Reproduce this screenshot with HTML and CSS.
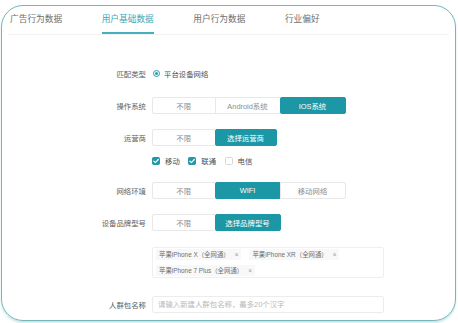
FILE: index.html
```html
<!DOCTYPE html>
<html lang="zh-CN">
<head>
<meta charset="utf-8">
<link rel="stylesheet" href="styles.css">
</head>
<body>
<div class="frame">
  <div class="tabs">
    <div class="tab">广告行为数据</div>
    <div class="tab active">用户基础数据</div>
    <div class="tab">用户行为数据</div>
    <div class="tab">行业偏好</div>
  </div>
  <div class="form">
    <div class="row row-match">
      <span class="label">匹配类型</span>
      <div class="ctrl radio-line">
        <span class="radio"></span><span class="opt">平台设备网络</span>
      </div>
    </div>
    <div class="row row-os">
      <span class="label">操作系统</span>
      <div class="ctrl seg">
        <span class="seg-btn">不限</span>
        <span class="seg-btn">Android系统</span>
        <span class="seg-btn on">IOS系统</span>
      </div>
    </div>
    <div class="row row-isp">
      <span class="label">运营商</span>
      <div class="ctrl seg">
        <span class="seg-btn">不限</span>
        <span class="seg-btn on narrow">选择运营商</span>
      </div>
    </div>
    <div class="row row-checks">
      <span class="label"></span>
      <div class="ctrl checks">
        <span class="check-item"><span class="cb on"><svg viewBox="0 0 8 8" width="8" height="8"><path d="M1.8 4.1 L3.4 5.6 L6.3 2.5" fill="none" stroke="#fff" stroke-width="1.2" stroke-linecap="round" stroke-linejoin="round"/></svg></span><span class="opt">移动</span></span>
        <span class="check-item"><span class="cb on"><svg viewBox="0 0 8 8" width="8" height="8"><path d="M1.8 4.1 L3.4 5.6 L6.3 2.5" fill="none" stroke="#fff" stroke-width="1.2" stroke-linecap="round" stroke-linejoin="round"/></svg></span><span class="opt">联通</span></span>
        <span class="check-item"><span class="cb"></span><span class="opt">电信</span></span>
      </div>
    </div>
    <div class="row row-net">
      <span class="label">网络环境</span>
      <div class="ctrl seg">
        <span class="seg-btn">不限</span>
        <span class="seg-btn on">WIFI</span>
        <span class="seg-btn">移动网络</span>
      </div>
    </div>
    <div class="row row-brand">
      <span class="label">设备品牌型号</span>
      <div class="ctrl seg">
        <span class="seg-btn">不限</span>
        <span class="seg-btn on">选择品牌型号</span>
      </div>
    </div>
    <div class="row row-tags">
      <span class="label"></span>
      <div class="ctrl tagbox">
        <span class="tag">苹果iPhone X（全网通）<span class="x">×</span></span>
        <span class="tag">苹果iPhone XR（全网通）<span class="x">×</span></span>
        <span class="tag">苹果iPhone 7 Plus（全网通）<span class="x">×</span></span>
      </div>
    </div>
    <div class="row row-name">
      <span class="label">人群包名称</span>
      <div class="ctrl">
        <input class="name-input" type="text" placeholder="请输入新建人群包名称，最多20个汉字">
      </div>
    </div>
  </div>
</div>
</body>
</html>
```
FILE: styles.css
```css
* { box-sizing: border-box; }
html, body { margin: 0; padding: 0; background: #fff; }
body {
  font-family: "Liberation Sans", "Noto Sans CJK SC", sans-serif;
  width: 458px;
  height: 323px;
  overflow: hidden;
}
.frame {
  margin: 5px 0 0 1px;
  width: 455px;
  height: 316px;
  border: 1.5px solid #74b6ba;
  border-radius: 22px;
  box-shadow: 0 1.5px 2px rgba(110, 180, 185, 0.35);
  overflow: hidden;
}
.tabs {
  display: flex;
  margin: 0 6px;
  padding-left: 2px;
  gap: 39.5px;
  height: 28.5px;
  border-bottom: 1px solid #f3f3f3;
}
.tab {
  height: 27.5px;
  line-height: 27.5px;
  font-size: 8.7px;
  color: #6e6e6e;
  white-space: nowrap;
}
.tab.active {
  color: #3aa9b8;
  border-bottom: 2px solid #47aebd;
}
.form {
  display: flex;
  flex-direction: column;
}
.row {
  display: grid;
  grid-template-columns: 144px 1fr;
  column-gap: 6px;
  align-items: center;
}
.label {
  text-align: right;
  font-size: 7.4px;
  color: #5e5e5e;
  white-space: nowrap;
}
.row-match { margin-top: 31.5px; height: 14px; }
.row-os { margin-top: 17px; }
.row-isp { margin-top: 15px; }
.row-checks { margin-top: 9px; height: 10px; }
.row-net { margin-top: 17px; }
.row-brand { margin-top: 15px; }
.row-tags { margin-top: 16px; }
.row-name { margin-top: 18px; }

.radio-line { display: flex; align-items: center; gap: 4px; padding-left: 1px; }
.radio {
  width: 7px; height: 7px;
  border: 1px solid #2a9dab;
  border-radius: 50%;
  display: flex; align-items: center; justify-content: center;
}
.radio::after {
  content: "";
  width: 3px; height: 3px;
  border-radius: 50%;
  background: #2a9dab;
}
.opt { font-size: 7.4px; color: #4e4e4e; white-space: nowrap; }

.seg { display: flex; height: 17px; }
.seg-btn {
  width: 66px;
  height: 17px;
  border: 1px solid #e8e8e8;
  margin-left: -1px;
  display: flex; align-items: center; justify-content: center;
  font-size: 7.4px;
  color: #8c8c8c;
  white-space: nowrap;
  background: #fff;
}
.seg-btn:first-child { margin-left: 0; border-radius: 2px 0 0 2px; width: 63.5px; }
.seg-btn:last-child { border-radius: 0 2px 2px 0; }
.seg-btn.on {
  background: #1b97a5;
  border-color: #1b97a5;
  color: #fff;
  border-radius: 2px;
}
.seg-btn.narrow { width: 62px; }

.checks { display: flex; align-items: center; gap: 8.5px; }
.check-item { display: flex; align-items: center; gap: 5px; }
.cb {
  width: 8px; height: 8px;
  border: 1px solid #d8d8d8;
  border-radius: 1.5px;
  background: #fff;
  display: flex; align-items: center; justify-content: center;
}
.cb.on { background: #2197a8; border-color: #2197a8; }
.cb svg { display: block; flex: none; }

.tagbox {
  width: 232px;
  height: 31px;
  border: 1px solid #efefef;
  border-radius: 2px;
  padding: 1px 3px 0;
  display: flex;
  flex-wrap: wrap;
  align-content: flex-start;
  column-gap: 8px;
  row-gap: 4.5px;
}
.tag {
  height: 11px;
  line-height: 11px;
  padding: 0 3px;
  font-size: 6.4px;
  color: #707070;
  background: #f8f8f8;
  white-space: nowrap;
}
.tag .x { margin-left: 5px; color: #9a9a9a; }

.name-input {
  display: block;
  width: 232px;
  height: 17px;
  border: 1px solid #ececec;
  border-radius: 2px;
  padding: 0 5px;
  font-family: "Liberation Sans", "Noto Sans CJK SC", sans-serif;
  font-size: 7.4px;
  color: #555;
  outline: none;
  background: #fff;
}
.name-input::placeholder { color: #b8b8b8; }
```
